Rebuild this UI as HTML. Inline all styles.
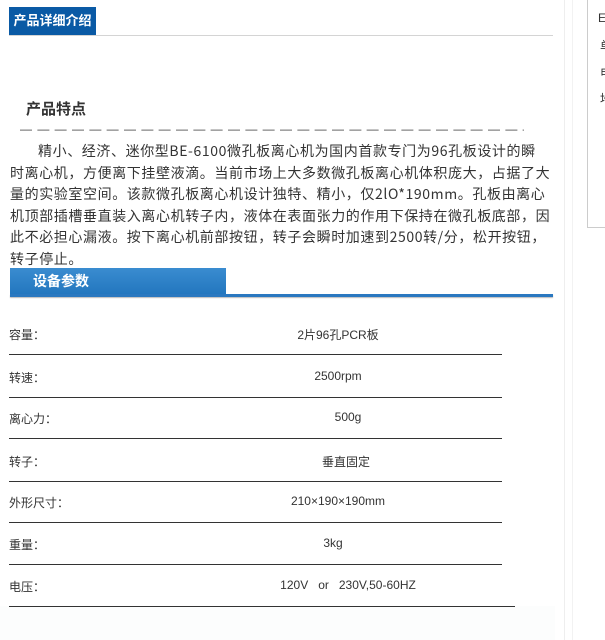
<!DOCTYPE html>
<html><head><meta charset="utf-8"><style>
*{margin:0;padding:0;box-sizing:border-box}
body{width:605px;height:640px;overflow:hidden;background:#fff;font-family:"Liberation Sans","Noto Sans CJK SC",sans-serif;color:#333;position:relative}
.a{position:absolute}
.tab{left:9px;top:7px;width:87px;height:29px;background:#0a5aa5;color:#fff;font-weight:bold;font-size:13px;line-height:27px;text-align:center}
.gl{left:9px;top:35px;width:544px;height:1px;background:#d4d4d4}
.t1{left:26px;top:98px;font-size:15px;font-weight:bold;color:#333}
.dash{left:20px;top:122px;width:504px;overflow:hidden;white-space:nowrap;font-size:12px;color:#444;letter-spacing:1px}
.p{left:10px;top:141px;width:560px;font-size:14px;line-height:21.6px;color:#333;letter-spacing:0.6px;font-family:"Noto Sans CJK SC",sans-serif;white-space:nowrap}
.bar{left:10px;top:268px;width:216px;height:27px;background:linear-gradient(#3a8cd0,#2276be);color:#fff;font-weight:bold;font-size:14px;line-height:27px;padding-left:23px}
.bl{left:10px;top:294px;width:543px;height:3px;background:#2a78c0;box-shadow:0 1px 1px #bbb}
.lb{left:9px;font-size:12px;font-family:"Noto Sans CJK SC",sans-serif}
.v{left:238px;width:200px;text-align:center;font-size:12px}
.ln{left:9px;width:493px;height:1px;background:#333}
.vr1{left:564px;top:0;width:1px;height:640px;background:#eee}
.vr2{left:572px;top:0;width:1px;height:640px;background:#f2f2f2}
.box{left:587px;top:-1px;width:30px;height:229px;border:1px solid #ccc;font-size:12px}
.box span{position:absolute;left:12px}
.fade{left:0;top:606px;width:555px;height:34px;background:#fcfdfd}
</style></head><body>
<div class="a fade"></div>
<div class="a tab">产品详细介绍</div>
<div class="a gl"></div>
<div class="a t1">产品特点</div>
<div class="a dash">— — — — — — — — — — — — — — — — — — — — — — — — — — — — — — — — — — — — — — — — — — —</div>
<div class="a p"><span style="padding-left:28px"></span>精小、经济、迷你型BE-6100微孔板离心机为国内首款专门为96孔板设计的瞬<br>时离心机，方便离下挂壁液滴。当前市场上大多数微孔板离心机体积庞大，占据了大<br>量的实验室空间。该款微孔板离心机设计独特、精小，仅2lO*190mm。孔板由离心<br>机顶部插槽垂直装入离心机转子内，液体在表面张力的作用下保持在微孔板底部，因<br>此不必担心漏液。按下离心机前部按钮，转子会瞬时加速到2500转/分，松开按钮，<br>转子停止。</div>
<div class="a bar">设备参数</div>
<div class="a bl"></div>

<div class="a lb" style="top:326px">容量：</div><div class="a v" style="top:326px">2片96孔PCR板</div><div class="a ln" style="top:354px"></div>
<div class="a lb" style="top:369px">转速：</div><div class="a v" style="top:369px">2500rpm</div><div class="a ln" style="top:397px"></div>
<div class="a lb" style="top:410px">离心力：</div><div class="a v" style="top:410px;left:248px">500g</div><div class="a ln" style="top:438px"></div>
<div class="a lb" style="top:453px">转子：</div><div class="a v" style="top:453px;left:246px">垂直固定</div><div class="a ln" style="top:481px"></div>
<div class="a lb" style="top:494px">外形尺寸：</div><div class="a v" style="top:494px">210×190×190mm</div><div class="a ln" style="top:522px"></div>
<div class="a lb" style="top:536px">重量：</div><div class="a v" style="top:536px;left:233px">3kg</div><div class="a ln" style="top:564px"></div>
<div class="a lb" style="top:578px">电压：</div><div class="a v" style="top:578px;left:248px">120V &nbsp; or &nbsp; 230V,50-60HZ</div><div class="a ln" style="top:606px;width:506px"></div>

<div class="a vr1"></div><div class="a vr2"></div>
<div class="a box"><span style="top:11px;left:10px">En</span><span style="top:37px">单</span><span style="top:64px">电</span><span style="top:90px">地</span></div>
</body></html>
